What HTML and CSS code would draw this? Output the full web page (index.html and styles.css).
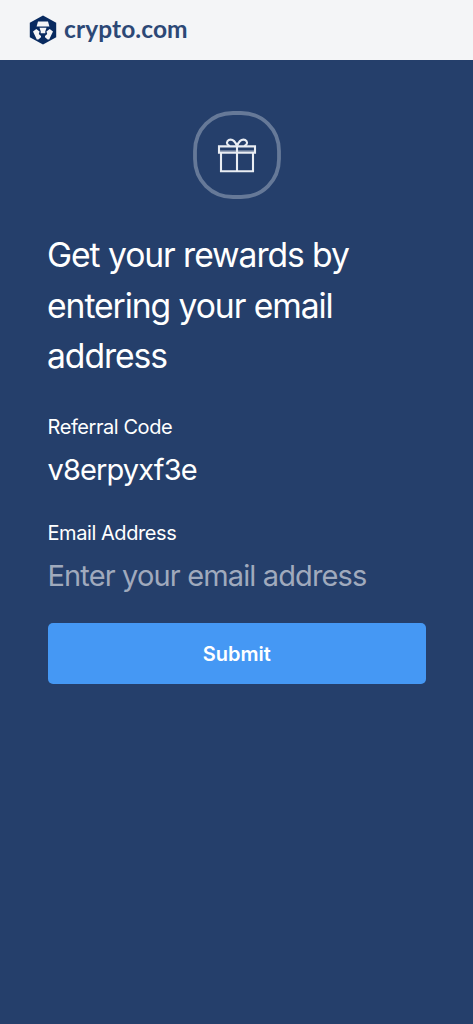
FILE: index.html
```html
<!DOCTYPE html>
<html lang="en">
<head>
<meta charset="utf-8">
<meta name="viewport" content="width=device-width, initial-scale=1">
<title>crypto.com</title>
<link rel="stylesheet" href="styles.css">
</head>
<body>
<header class="header">
  <svg class="logo" viewBox="0 0 28 30" aria-hidden="true">
    <path fill="#082a60" d="M14 .4 27.2 7.7V22.3L14 29.6.8 22.3V7.7Z"/>
    <path fill="#f4f5f7" d="M9 6.6H19L20.4 11.6H7.6Z"/>
    <path fill="#f4f5f7" d="M10.5 12.8H17.5L16.3 16.2V18.2H11.7V16.2Z"/>
    <path fill="#f4f5f7" d="M4 16.5 7.3 14 10.6 16.6 9.8 19.1 12 21V22.2L9.4 24.6H7.8Z"/>
    <path fill="#f4f5f7" d="M24 16.5 20.7 14 17.4 16.6 18.2 19.1 16 21V22.2L18.6 24.6H20.2Z"/>
  </svg>
  <span class="wordmark">crypto.com</span>
</header>
<main class="content">
  <svg class="badge" viewBox="0 0 88 88" fill="none" aria-hidden="true">
    <path stroke="#667998" stroke-width="3.8" d="M2 40C2 18.5 18.5 2 40 2H48C69.5 2 86 18.5 86 40V48C86 69.5 69.5 86 48 86H40C18.5 86 2 69.5 2 48Z"/>
    <g transform="translate(24 26)" stroke="#e9edf3" stroke-width="2.1">
      <path d="M2 9.4H38V15.7H2Z"/>
      <path d="M4 15.7V34.2H36V15.7M20 9.1V34.2"/>
      <path d="M20 9.1C18.5 5 16 2.6 13.5 2.6 10.8 2.6 9.4 5 10.2 6.8 10.8 8 11.8 8.8 13 9.1M20 9.1C21.5 5 24 2.6 26.5 2.6 29.2 2.6 30.6 5 29.8 6.8 29.2 8 28.2 8.8 27 9.1"/>
      <path stroke-opacity=".45" d="M2 14.4H38"/>
    </g>
  </svg>
  <h1 class="title">Get your rewards by<br>entering your email<br>address</h1>
  <form class="form">
    <div class="field">
      <span class="label">Referral Code</span>
      <span class="value">v8erpyxf3e</span>
    </div>
    <div class="field">
      <label class="label" for="email">Email Address</label>
      <input class="input" id="email" type="email" placeholder="Enter your email address">
    </div>
    <button class="submit" type="button">Submit</button>
  </form>
</main>
</body>
</html>
```
FILE: styles.css
```css
* { box-sizing: border-box; }
body {
  margin: 0;
  min-height: 100vh;
  background: #253f6b;
  color: #fff;
  font-family: Inter, "Liberation Sans", sans-serif;
}
.header {
  display: flex;
  align-items: center;
  gap: 7px;
  height: 60px;
  padding-left: 29px;
  background: #f4f5f7;
}
.logo { width: 28px; height: 30px; }
.wordmark {
  padding-bottom: 2px;
  font-family: Lato, sans-serif;
  font-size: 24.5px;
  font-weight: 700;
  line-height: 30px;
  letter-spacing: 0.1px;
  color: #2c4876;
}
.content { padding: 51px 47px 0 47.5px; }
.badge {
  display: block;
  width: 88px;
  height: 88px;
  margin: 0 auto;
}
.title {
  margin: 31.4px 0 0 -0.5px;
  font-size: 33.7px;
  font-weight: 400;
  line-height: 50.5px;
  letter-spacing: -1.08px;
  white-space: nowrap;
}
.form { margin-top: 31.1px; }
.field { display: flex; flex-direction: column; height: 106px; }
.label { font-size: 20px; line-height: 28px; letter-spacing: -0.43px; }
.value { margin-top: 10px; font-size: 29px; line-height: 38px; letter-spacing: -0.87px; }
.input {
  width: 100%;
  height: 38px;
  margin-top: 10px;
  padding: 0;
  border: 0;
  outline: 0;
  background: transparent;
  color: #fff;
  font: 400 29px/38px Inter, "Liberation Sans", sans-serif;
  letter-spacing: -0.86px;
}
.input::placeholder { color: #a0aabd; opacity: 1; }
.submit {
  display: block;
  width: 100%;
  height: 60.5px;
  margin-top: -1.8px;
  padding: 1px 0 0;
  border: 0;
  border-radius: 5px;
  background: #4598f4;
  color: #fff;
  font: 600 20px/60px Inter, "Liberation Sans", sans-serif;
}
```
